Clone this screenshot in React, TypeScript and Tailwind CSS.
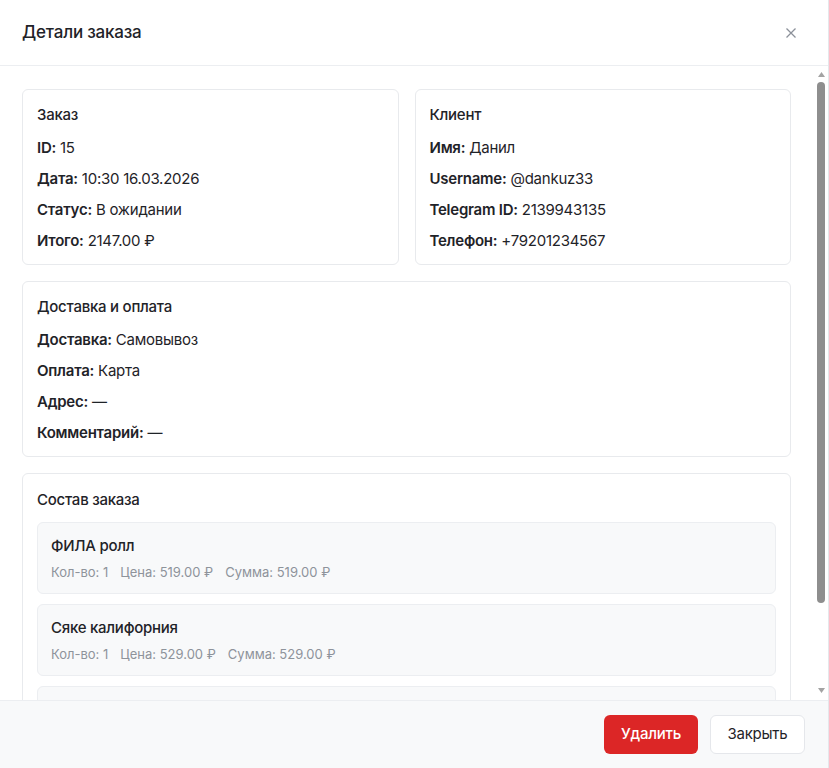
import React from "react";

const Row = ({ label, value }: { label: string; value: string }) => (
  <div className="leading-[22px]">
    <span className="font-semibold">{label}:</span> {value}
  </div>
);

const Card = ({ title, children }: { title: string; children: React.ReactNode }) => (
  <div className="rounded-md border border-[#e8eaed] bg-white px-[14px] pt-[14px] pb-[12px]">
    <div className="font-medium leading-[22px] mb-[11px]">{title}</div>
    <div className="flex flex-col gap-[9px]">{children}</div>
  </div>
);

const items = [
  { name: "ФИЛА ролл", qty: 1, price: "519.00", sum: "519.00" },
  { name: "Сяке калифорния", qty: 1, price: "529.00", sum: "529.00" },
  { name: "Запечённый ролл с угрём", qty: 1, price: "1099.00", sum: "1099.00" },
];

export default function App() {
  return (
    <div
      className="w-[829px] h-[768px] bg-white flex flex-col text-[15px] tracking-[-0.25px] text-[#1f2328] border-r border-[#e5e7eb] overflow-hidden"
      style={{ fontFamily: "Inter, 'Noto Sans', sans-serif" }}
    >
      <div className="h-[66px] shrink-0 flex items-center justify-between px-[22px] border-b border-[#eceef1]">
        <div className="text-[17px] font-medium tracking-[-0.2px]">Детали заказа</div>
        <button className="text-[#8b9099] mr-[9px]">
          <svg width="12" height="12" viewBox="0 0 12 12" fill="none" stroke="currentColor" strokeWidth="1.3">
            <path d="M1.5 1.5l9 9M10.5 1.5l-9 9" />
          </svg>
        </button>
      </div>
      <div className="flex-1 min-h-0 flex">
        <div className="flex-1 min-w-0 overflow-hidden">
          <div className="pl-[22px] pr-[23px] pt-[23px] pb-[23px] flex flex-col gap-4">
            <div className="grid grid-cols-2 gap-4">
              <Card title="Заказ">
                <Row label="ID" value="15" />
                <Row label="Дата" value="10:30 16.03.2026" />
                <Row label="Статус" value="В ожидании" />
                <Row label="Итого" value="2147.00 ₽" />
              </Card>
              <Card title="Клиент">
                <Row label="Имя" value="Данил" />
                <Row label="Username" value="@dankuz33" />
                <Row label="Telegram ID" value="2139943135" />
                <Row label="Телефон" value="+79201234567" />
              </Card>
            </div>
            <Card title="Доставка и оплата">
              <Row label="Доставка" value="Самовывоз" />
              <Row label="Оплата" value="Карта" />
              <Row label="Адрес" value="—" />
              <Row label="Комментарий" value="—" />
            </Card>
            <div className="rounded-md border border-[#e8eaed] bg-white px-[14px] pt-[15px] pb-[15px]">
              <div className="font-medium leading-[22px] mb-[11px]">Состав заказа</div>
              <div className="flex flex-col gap-[10px]">
                {items.map((it) => (
                  <div key={it.name} className="rounded-md border border-[#eceef1] bg-[#f8f9fa] px-[13px] h-[72px] flex flex-col justify-center">
                    <div className="font-medium leading-[22px]">{it.name}</div>
                    <div className="mt-[6px] text-[13px] tracking-normal text-[#8e939b] flex gap-3 leading-[18px]">
                      <span>Кол-во: {it.qty}</span>
                      <span>Цена: {it.price} ₽</span>
                      <span>Сумма: {it.sum} ₽</span>
                    </div>
                  </div>
                ))}
              </div>
            </div>
          </div>
        </div>
        {/* scrollbar */}
        <div className="w-[14px] shrink-0 flex flex-col bg-white">
          <div className="h-[13px] flex items-end justify-center pb-[2px]">
            <svg width="7" height="5" viewBox="0 0 7 5"><path d="M3.5 0L7 5H0z" fill="#a3a3a3" /></svg>
          </div>
          <div className="flex-1 pt-[3px] flex justify-center">
            <div className="w-[8px] h-[521px] rounded-full bg-[#8e8e8e]" />
          </div>
          <div className="h-[13px] flex items-start justify-center pt-[1px]">
            <svg width="7" height="5" viewBox="0 0 7 5"><path d="M0 0H7L3.5 5z" fill="#a3a3a3" /></svg>
          </div>
        </div>
      </div>
      <div className="h-[68px] shrink-0 bg-[#f8f9fa] border-t border-[#eceef1] flex items-center justify-end gap-3 pr-[23px]">
        <button className="h-[39px] w-[94px] rounded-md bg-[#dc2626] text-white font-medium text-[15px]">Удалить</button>
        <button className="h-[39px] w-[95px] rounded-md bg-white border border-[#e5e7eb] text-[15px] text-[#1f2328]">Закрыть</button>
      </div>
    </div>
  );
}
